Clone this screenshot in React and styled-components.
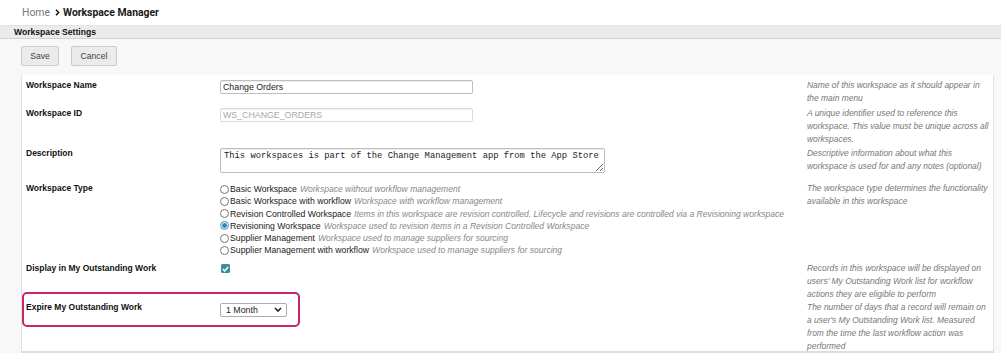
import React from 'react';
import styled, { createGlobalStyle } from 'styled-components';

const GlobalStyle = createGlobalStyle`
  html, body {
    margin: 0;
    padding: 0;
    background: #f8f8f8;
  }
  body {
    font-family: "Liberation Sans", Arial, sans-serif;
    color: #222;
  }
`;

const Page = styled.div`
  width: 1001px;
  height: 353px;
  overflow: hidden;
  display: flex;
  flex-direction: column;
  background: #f8f8f8;
`;

const Breadcrumb = styled.div`
  height: 25px;
  flex: 0 0 auto;
  display: flex;
  align-items: center;
  gap: 5px;
  padding-left: 22px;
  background: #fff;
  font-family: Roboto, "Liberation Sans", sans-serif;
  font-size: 10.4px;
`;

const Crumb = styled.span`
  color: #777;
`;

const Current = styled.span`
  display: flex;
  align-items: center;
  gap: 3px;
  font-weight: 700;
  color: #1a1a1a;
`;

const SectionBar = styled.div`
  height: 14px;
  box-sizing: border-box;
  flex: 0 0 auto;
  display: flex;
  align-items: center;
  padding-left: 14px;
  background: #ebebeb;
  border-top: 1px solid #e3e3e3;
  border-bottom: 1px solid #d2d2d2;
  font-size: 8.6px;
  font-weight: 700;
  color: #111;
`;

const Toolbar = styled.div`
  flex: 0 0 auto;
  display: flex;
  gap: 12px;
  padding: 7px 0 9px 21px;
`;

const Button = styled.button`
  height: 20px;
  width: ${p => p.$w}px;
  padding: 0;
  border: 1px solid #cbcbcb;
  border-radius: 2px;
  background: #ebebeb;
  font-family: "Liberation Sans", Arial, sans-serif;
  font-size: 8.6px;
  color: #444;
`;

const Panel = styled.div`
  flex: 1 1 0;
  min-height: 0;
  overflow: hidden;
  margin: 0 7px 0 21px;
  padding-left: 4px;
  background: #fff;
  border-left: 1px solid #e2e2e2;
  border-right: 1px solid #e2e2e2;
  border-bottom: 2px solid #dcdcdc;
`;

const Row = styled.div`
  display: grid;
  grid-template-columns: 194px 587px 186px;
  align-items: start;
  padding-top: ${p => p.$pt}px;
`;

const Label = styled.div`
  font-size: 8.5px;
  font-weight: 700;
  line-height: 13px;
  color: #111;
  white-space: nowrap;
`;

const Field = styled.div`
  padding-top: ${p => p.$mt}px;
`;

const Help = styled.div`
  font-size: 8.45px;
  font-style: italic;
  line-height: 13px;
  color: #777;
  white-space: nowrap;
`;

const HelpLine = styled.span`
  display: block;
`;

const TextInput = styled.input`
  display: block;
  box-sizing: border-box;
  width: 253px;
  height: 14px;
  margin: 0;
  padding: 0 2px;
  border: 1px solid ${p => (p.disabled ? '#dadada' : '#bdbdbd')};
  border-radius: 2px;
  background: #fff;
  box-shadow: inset 0 1px 1px rgba(0, 0, 0, 0.07);
  font-family: "Liberation Sans", Arial, sans-serif;
  font-size: 8.8px;
  color: ${p => (p.disabled ? '#a8a8a8' : '#222')};
  outline: none;
`;

const TextArea = styled.textarea`
  display: block;
  box-sizing: border-box;
  width: 385px;
  height: 25px;
  margin: 0;
  padding: 2px 3px;
  border: 1px solid #bdbdbd;
  border-radius: 2px;
  resize: both;
  box-shadow: inset 0 1px 1px rgba(0, 0, 0, 0.07);
  font-family: "Liberation Mono", "DejaVu Sans Mono", monospace;
  font-size: 8.8px;
  line-height: 11px;
  color: #222;
  outline: none;
`;

const RadioList = styled.div`
  display: flex;
  flex-direction: column;
  padding-top: 0.7px;
`;

const RadioLine = styled.div`
  display: flex;
  align-items: center;
  height: 12.2px;
  font-size: 8.7px;
  color: #222;
  white-space: nowrap;
`;

const RadioDot = styled.span`
  box-sizing: border-box;
  width: 9px;
  height: 9px;
  margin-right: 1px;
  border-radius: 50%;
  border: 1px solid ${p => (p.$on ? '#5a9bc4' : '#777')};
  background: ${p =>
    p.$on
      ? 'radial-gradient(circle, #2f86c0 0 42%, #c6e3f2 48%)'
      : '#fff'};
`;

const RadioDesc = styled.span`
  margin-left: 3px;
  font-size: 8.55px;
  font-style: italic;
  color: #888;
`;

const Check = styled.span`
  display: flex;
  align-items: center;
  justify-content: center;
  width: 9px;
  height: 9px;
  margin-left: 1px;
  border-radius: 1.5px;
  background: #3a8d9f;
`;

const Highlight = styled.div`
  box-sizing: border-box;
  grid-column: 1 / 3;
  display: flex;
  align-items: flex-start;
  width: 278px;
  margin: -9.5px 0 0 -4px;
  padding: 7.2px 11px 8px 2px;
  border: 2px solid #c8256e;
  border-radius: 5px;
`;

const HighlightLabel = styled(Label)`
  width: 194px;
  flex: 0 0 auto;
`;

const Select = styled.div`
  box-sizing: border-box;
  display: flex;
  align-items: center;
  justify-content: space-between;
  width: 67px;
  height: 14px;
  margin-top: 1.8px;
  padding: 0 4px 0 5px;
  border: 1px solid #adadad;
  border-radius: 2px;
  background: #fff;
  font-size: 8.8px;
  color: #222;
`;

const Chevron = () => (
  <svg width="8" height="5" viewBox="0 0 8 5">
    <path d="M1 1l3 3 3-3" fill="none" stroke="#222" strokeWidth="1.6" />
  </svg>
);

const workspaceTypes = [
  ['Basic Workspace', 'Workspace without workflow management'],
  ['Basic Workspace with workflow', 'Workspace with workflow management'],
  [
    'Revision Controlled Workspace',
    'Items in this workspace are revision controlled. Lifecycle and revisions are controlled via a Revisioning workspace'
  ],
  ['Revisioning Workspace', 'Workspace used to revision items in a Revision Controlled Workspace', true],
  ['Supplier Management', 'Workspace used to manage suppliers for sourcing'],
  ['Supplier Management with workflow', 'Workspace used to manage suppliers for sourcing']
];

const HelpText = ({ lines }) => (
  <Help>
    {lines.map(line => (
      <HelpLine key={line}>{line}</HelpLine>
    ))}
  </Help>
);

export default function App() {
  return (
    <Page>
      <GlobalStyle />
      <Breadcrumb>
        <Crumb>Home</Crumb>
        <Current>
          <svg width="5" height="7" viewBox="0 0 5 7">
            <path d="M1 0.8l2.6 2.7L1 6.2" fill="none" stroke="#111" strokeWidth="1.5" />
          </svg>
          Workspace Manager
        </Current>
      </Breadcrumb>
      <SectionBar>Workspace Settings</SectionBar>
      <Toolbar>
        <Button $w={38}>Save</Button>
        <Button $w={46}>Cancel</Button>
      </Toolbar>
      <Panel>
        <Row $pt={3.5}>
          <Label>Workspace Name</Label>
          <Field $mt={1.5}>
            <TextInput defaultValue="Change Orders" />
          </Field>
          <HelpText lines={['Name of this workspace as it should appear in', 'the main menu']} />
        </Row>
        <Row $pt={2.3}>
          <Label>Workspace ID</Label>
          <Field $mt={1.2}>
            <TextInput defaultValue="WS_CHANGE_ORDERS" disabled />
          </Field>
          <HelpText
            lines={[
              'A unique identifier used to reference this',
              'workspace. This value must be unique across all',
              'workspaces.'
            ]}
          />
        </Row>
        <Row $pt={1}>
          <Label>Description</Label>
          <Field $mt={1.2}>
            <TextArea
              readOnly
              value="This workspaces is part of the Change Management app from the App Store"
            />
          </Field>
          <HelpText
            lines={[
              'Descriptive information about what this',
              'workspace is used for and any notes (optional)'
            ]}
          />
        </Row>
        <Row $pt={9.5}>
          <Label>Workspace Type</Label>
          <RadioList>
            {workspaceTypes.map(([name, desc, on]) => (
              <RadioLine key={name}>
                <RadioDot $on={on} />
                {name}
                <RadioDesc>{desc}</RadioDesc>
              </RadioLine>
            ))}
          </RadioList>
          <HelpText
            lines={['The workspace type determines the functionality', 'available in this workspace']}
          />
        </Row>
        <Row $pt={6.1}>
          <Label>Display in My Outstanding Work</Label>
          <Field $mt={2}>
            <Check>
              <svg width="7" height="6" viewBox="0 0 7 6">
                <path d="M0.8 3.1l1.9 1.8L6.2 1" fill="none" stroke="#fff" strokeWidth="1.4" />
              </svg>
            </Check>
          </Field>
          <HelpText
            lines={[
              'Records in this workspace will be displayed on',
              "users' My Outstanding Work list for workflow",
              'actions they are eligible to perform'
            ]}
          />
        </Row>
        <Row $pt={0}>
          <Highlight>
            <HighlightLabel>Expire My Outstanding Work</HighlightLabel>
            <Select>
              1 Month
              <Chevron />
            </Select>
          </Highlight>
          <HelpText
            lines={[
              'The number of days that a record will remain on',
              "a user's My Outstanding Work list. Measured",
              'from the time the last workflow action was',
              'performed'
            ]}
          />
        </Row>
      </Panel>
    </Page>
  );
}
